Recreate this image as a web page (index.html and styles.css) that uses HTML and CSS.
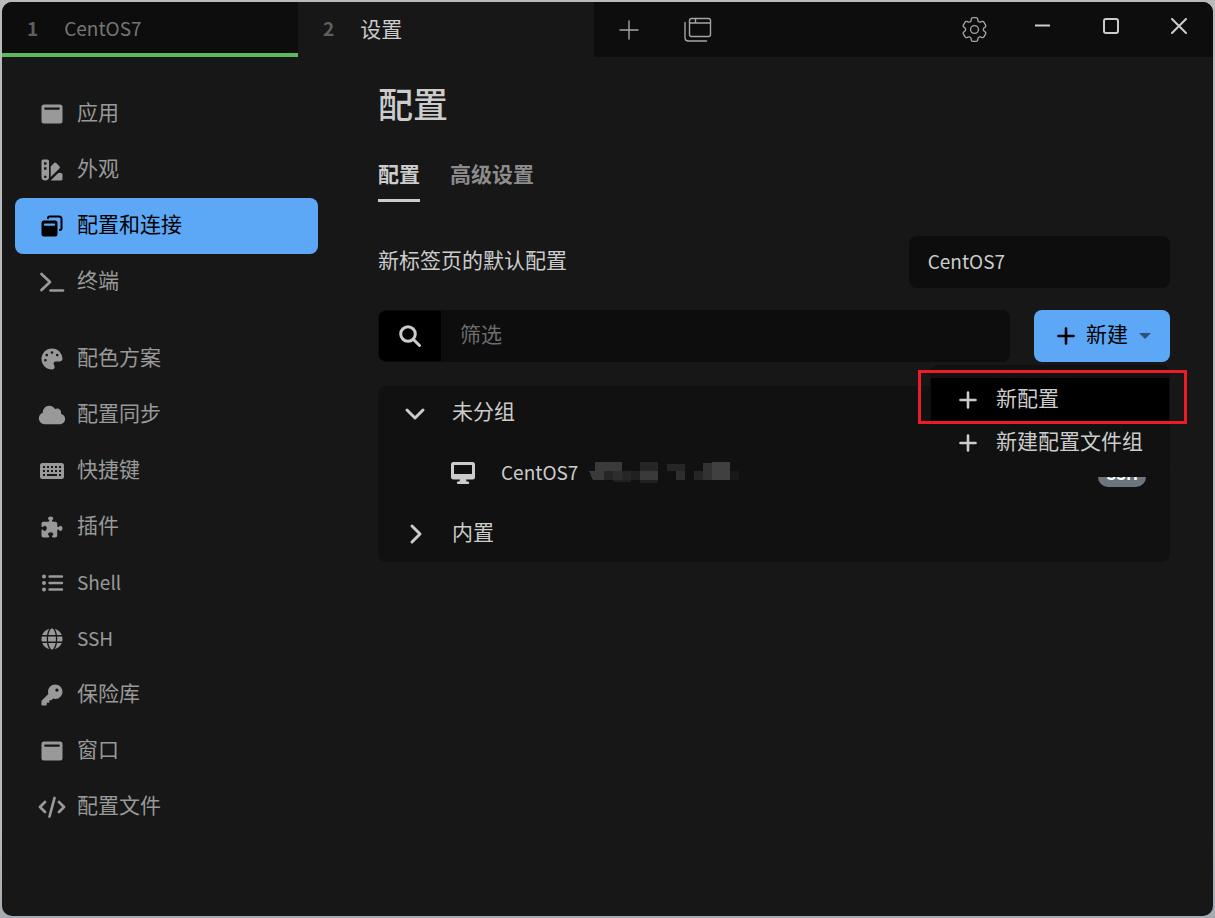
FILE: index.html
```html
<!DOCTYPE html>
<html lang="zh-CN">
<head>
    <meta charset="UTF-8">
    <meta name="viewport" content="width=device-width, initial-scale=1.0">
    <title>设置</title>
    <link rel="stylesheet" href="styles.css">
</head>
<body>
<div class="window">
    <!-- Tab bar -->
    <header class="tab-bar">
        <button type="button" class="tab has-activity"><span class="tab-index">1</span><span class="latin">CentOS7</span></button>
        <button type="button" class="tab active"><span class="tab-index">2</span><span>设置</span></button>
        <button type="button" class="bar-btn" aria-label="新标签页">
            <svg width="20" height="20" viewBox="0 0 20 20" class="line"><path d="M10 1v18M1 10h18"/></svg>
        </button>
        <button type="button" class="bar-btn" aria-label="配置和连接">
            <svg width="28" height="26" viewBox="0 0 28 26" class="line"><rect x="5.5" y="1.5" width="21" height="18" rx="2"/><path d="M5.5 6h21M11.500 2v4M1 5.500v15q0 3.500 3.500 3.500h18"/></svg>
        </button>
        <span class="spacer"></span>
        <button type="button" class="bar-btn" aria-label="设置">
            <svg width="25" height="25" viewBox="2.500 2.500 19 19" class="line thin"><path d="M9.594 3.94c.09-.542.56-.94 1.11-.94h2.593c.55 0 1.02.398 1.11.94l.213 1.281c.063.374.313.686.645.87.074.04.147.083.22.127.325.196.72.257 1.075.124l1.217-.456a1.125 1.125 0 0 1 1.37.49l1.296 2.247a1.125 1.125 0 0 1-.26 1.431l-1.003.827c-.293.241-.438.613-.43.992a7.723 7.723 0 0 1 0 .255c-.008.378.137.75.43.991l1.004.827c.424.35.534.955.26 1.43l-1.298 2.247a1.125 1.125 0 0 1-1.369.491l-1.217-.456c-.355-.133-.75-.072-1.076.124a6.47 6.47 0 0 1-.22.128c-.331.183-.581.495-.644.869l-.213 1.281c-.09.543-.56.94-1.11.94h-2.594c-.55 0-1.019-.398-1.11-.94l-.213-1.281c-.062-.374-.312-.686-.644-.87a6.52 6.52 0 0 1-.22-.127c-.325-.196-.72-.257-1.076-.124l-1.217.456a1.125 1.125 0 0 1-1.369-.49l-1.297-2.247a1.125 1.125 0 0 1 .26-1.431l1.004-.827c.292-.24.437-.613.43-.991a6.932 6.932 0 0 1 0-.255c.007-.38-.138-.751-.43-.992l-1.004-.827a1.125 1.125 0 0 1-.26-1.43l1.297-2.247a1.125 1.125 0 0 1 1.37-.491l1.216.456c.356.133.751.072 1.076-.124.072-.044.146-.086.22-.128.332-.183.582-.495.644-.869l.214-1.28Z"/><circle cx="12" cy="12" r="3"/></svg>
        </button>
        <div class="window-controls">
            <button type="button" class="bar-btn" aria-label="最小化">
                <svg width="16" height="16" viewBox="0 0 16 16"><path d="M0 6.500h15v2H0z"/></svg>
            </button>
            <button type="button" class="bar-btn" aria-label="最大化">
                <svg width="16" height="16" viewBox="0 0 16 16" class="line bold"><rect x="1" y="1" width="14" height="14" rx="2"/></svg>
            </button>
            <button type="button" class="bar-btn" aria-label="关闭">
                <svg width="16" height="16" viewBox="0 0 16 16" class="line bold"><path d="M1 1l14 14M15 1L1 15"/></svg>
            </button>
        </div>
    </header>

    <div class="page">
        <!-- Sidebar -->
        <nav class="sidebar">
            <div class="nav-group">
                <a href="#application"><svg viewBox="0 0 28 22"><path fill-rule="evenodd" d="M6 1.500h16a2.500 2.500 0 0 1 2.500 2.500v14a2.500 2.500 0 0 1-2.500 2.500H6a2.500 2.500 0 0 1-2.500-2.500V4A2.500 2.500 0 0 1 6 1.500zm1.200 3a1 1 0 0 0 0 2.200h13.600a1 1 0 0 0 0-2.200z"/></svg><span class="text">应用</span></a>
                <a href="#appearance"><svg viewBox="0 0 28 22"><path fill-rule="evenodd" d="M5 .5h4.500a1.500 1.500 0 0 1 1.500 1.500v15.800a3.750 3.750 0 0 1-7.500 0V2A1.500 1.500 0 0 1 5 .5zm1 2.800v2.400h2.500V3.300zm0 5v2.400h2.500V8.300zm1.200 8.200a1.300 1.300 0 1 0 .1 0zM12.700 7.500l3.400-3.400a1.500 1.500 0 0 1 2.100 0l3.200 3.200a1.500 1.500 0 0 1 0 2.100l-8.700 8.700zM20.300 14H23a1.500 1.500 0 0 1 1.500 1.500V20a1.500 1.500 0 0 1-1.500 1.500H12.700z"/></svg><span class="text">外观</span></a>
                <a href="#profiles" class="active"><svg viewBox="0 0 28 22"><path fill-rule="evenodd" d="M6 5.500h11a2.500 2.500 0 0 1 2.500 2.500v11a2.500 2.500 0 0 1-2.500 2.500H6A2.500 2.500 0 0 1 3.500 19V8A2.500 2.500 0 0 1 6 5.500zm.8 2.900a1 1 0 0 0-1 1v.3a1 1 0 0 0 1 1h9.400a1 1 0 0 0 1-1v-.3a1 1 0 0 0-1-1z"/><path class="stroke thin" d="M10 3.200q0-1.700 1.700-1.700h9.300q2.500 0 2.500 2.500v9.300q0 1.700-1.700 1.700"/></svg><span class="text">配置和连接</span></a>
                <a href="#terminal"><svg viewBox="0 0 28 22"><path class="stroke wide" d="M3.500 3l8.500 8-8.500 8M12.500 19.500h12.500"/></svg><span class="text">终端</span></a>
            </div>
            <div class="nav-group">
                <a href="#colors"><svg viewBox="-85 -12 683 536"><path d="M512 256c0 .9 0 1.800 0 2.700c-.4 36.500-33.600 61.300-70.100 61.300H344c-26.500 0-48 21.500-48 48c0 3.400 .4 6.700 1 9.900c2.100 10.200 6.500 20 10.800 29.900c6.100 13.800 12.100 27.500 12.100 42c0 31.800-21.600 60.700-53.400 62c-3.500 .1-7 .2-10.600 .2C114.600 512 0 397.400 0 256S114.600 0 256 0S512 114.600 512 256zM128 288a32 32 0 1 0 -64 0 32 32 0 1 0 64 0zm0-96a32 32 0 1 0 0-64 32 32 0 1 0 0 64zM288 96a32 32 0 1 0 -64 0 32 32 0 1 0 64 0zm96 96a32 32 0 1 0 0-64 32 32 0 1 0 0 64z"/></svg><span class="text">配色方案</span></a>
                <a href="#sync"><svg viewBox="-21 -12 683 536"><path d="M0 336c0 79.500 64.500 144 144 144H512c70.700 0 128-57.300 128-128c0-61.900-44-113.600-102.400-125.400c4.100-10.700 6.400-22.400 6.400-34.600c0-53-43-96-96-96c-19.700 0-38.100 6-53.300 16.200C367 64.200 315.300 32 256 32C167.600 32 96 103.600 96 192c0 2.700 .1 5.400 .2 8.100C40.200 219.800 0 273.200 0 336z"/></svg><span class="text">配置同步</span></a>
                <a href="#hotkeys"><svg viewBox="0 0 28 22"><path fill-rule="evenodd" d="M4.500 3h19A2.500 2.500 0 0 1 26 5.500v11a2.500 2.500 0 0 1-2.500 2.500h-19A2.500 2.500 0 0 1 2 16.500v-11A2.500 2.500 0 0 1 4.500 3zM5 6v2h2V6zm4 0v2h2V6zm4 0v2h2V6zm4 0v2h2V6zm4 0v2h2V6zM5 10v2h2v-2zm4 0v2h2v-2zm4 0v2h2v-2zm4 0v2h2v-2zm4 0v2h2v-2zM5 14v2h2v-2zm4 0v2h10v-2zm12 0v2h2v-2z"/></svg><span class="text">快捷键</span></a>
                <a href="#plugins"><svg viewBox="-85 -12 683 536"><path d="M192 104.800c0-9.200-5.800-17.300-13.200-22.800C167.200 73.300 160 61.300 160 48c0-26.500 28.700-48 64-48s64 21.500 64 48c0 13.300-7.200 25.300-18.800 34c-7.400 5.500-13.200 13.600-13.200 22.800v0c0 12.800 10.400 23.200 23.200 23.200H336c26.500 0 48 21.500 48 48v56.800c0 12.800 10.400 23.200 23.200 23.200v0c9.200 0 17.300-5.800 22.800-13.200c8.700-11.600 20.700-18.800 34-18.800c26.500 0 48 28.700 48 64s-21.500 64-48 64c-13.300 0-25.300-7.200-34-18.800c-5.500-7.400-13.600-13.200-22.800-13.200v0c-12.800 0-23.200 10.400-23.200 23.200V464c0 26.500-21.500 48-48 48H279.200c-12.800 0-23.200-10.400-23.200-23.200v0c0-9.200 5.800-17.300 13.200-22.800c11.600-8.700 18.800-20.700 18.800-34c0-26.500-28.700-48-64-48s-64 21.500-64 48c0 13.300 7.200 25.300 18.800 34c7.400 5.500 13.200 13.600 13.200 22.800v0c0 12.800-10.400 23.200-23.200 23.200H48c-26.500 0-48-21.500-48-48V343.200C0 330.400 10.400 320 23.200 320v0c9.200 0 17.300 5.800 22.800 13.200C54.700 344.800 66.700 352 80 352c26.500 0 48-28.700 48-64s-21.500-64-48-64c-13.300 0-25.300 7.200-34 18.800C40.500 250.200 32.400 256 23.200 256v0C10.400 256 0 245.600 0 232.800V176c0-26.500 21.500-48 48-48H168.800c12.800 0 23.200-10.400 23.200-23.200v0z"/></svg><span class="text">插件</span></a>
                <a href="#shell"><svg viewBox="0 0 28 22"><circle cx="6" cy="4.500" r="2"/><circle cx="6" cy="11" r="2"/><circle cx="6" cy="17.500" r="2"/><path class="stroke" d="M11.500 4.500H24M11.500 11H24M11.500 17.500H24"/></svg><span class="latin">Shell</span></a>
                <a href="#ssh"><svg viewBox="-85 -12 683 536"><path d="M352 256c0 22.200-1.200 43.600-3.300 64H163.300c-2.200-20.400-3.300-41.800-3.300-64s1.200-43.600 3.300-64H348.700c2.200 20.400 3.300 41.800 3.300 64zm28.800-64H503.900c5.300 20.500 8.100 41.900 8.100 64s-2.800 43.500-8.100 64H380.800c2.100-20.600 3.200-42 3.200-64s-1.100-43.400-3.200-64zm112.600-32H376.700c-10-63.900-29.800-117.400-55.300-151.600c78.300 20.700 142 77.500 171.900 151.600zm-149.100 0H167.700c6.100-36.400 15.500-68.600 27-94.700c10.500-23.600 22.200-40.700 33.500-51.500C239.400 3.200 248.700 0 256 0s16.600 3.200 27.800 13.800c11.300 10.800 23 27.900 33.500 51.500c11.600 26 20.900 58.200 27 94.700zm-209 0H18.600C48.600 85.900 112.200 29.100 190.600 8.400C165.100 42.600 145.300 96.100 135.300 160zM8.100 192H131.200c-2.100 20.600-3.200 42-3.200 64s1.100 43.400 3.200 64H8.100C2.800 299.500 0 278.100 0 256s2.800-43.500 8.100-64zM194.700 446.600c-11.600-26-20.900-58.200-27-94.600H344.300c-6.100 36.400-15.500 68.600-27 94.600c-10.500 23.600-22.200 40.700-33.500 51.500C272.600 508.800 263.300 512 256 512s-16.600-3.200-27.800-13.800c-11.300-10.800-23-27.900-33.500-51.500zM135.300 352c10 63.900 29.800 117.400 55.300 151.600C112.200 482.900 48.600 426.100 18.600 352H135.300zm358.100 0c-30 74.100-93.600 130.900-171.900 151.600c25.500-34.200 45.200-87.700 55.300-151.600H493.400z"/></svg><span class="latin">SSH</span></a>
                <a href="#vault"><svg viewBox="-85 -12 683 536"><path d="M336 352c97.200 0 176-78.800 176-176S433.200 0 336 0S160 78.800 160 176c0 18.700 2.900 36.800 8.300 53.700L7 391c-4.500 4.500-7 10.600-7 17v80c0 13.300 10.700 24 24 24h80c13.300 0 24-10.700 24-24V448h40c13.300 0 24-10.700 24-24V384h40c6.400 0 12.500-2.500 17-7l33.300-33.300c16.900 5.400 35 8.300 53.700 8.300zM376 96a40 40 0 1 1 0 80 40 40 0 1 1 0-80z"/></svg><span class="text">保险库</span></a>
                <a href="#window"><svg viewBox="0 0 28 22"><path fill-rule="evenodd" d="M6 1.500h16a2.500 2.500 0 0 1 2.500 2.500v14a2.500 2.500 0 0 1-2.500 2.500H6a2.500 2.500 0 0 1-2.500-2.500V4A2.500 2.500 0 0 1 6 1.500zm1.200 3a1 1 0 0 0 0 2.200h13.600a1 1 0 0 0 0-2.200z"/></svg><span class="text">窗口</span></a>
                <a href="#config-file"><svg viewBox="0 0 28 22"><path class="stroke wide" d="M7 6l-5 5 5 5M21 6l5 5-5 5M16.500 2l-5 18.500"/></svg><span class="text">配置文件</span></a>
            </div>
        </nav>

        <!-- Settings content -->
        <main class="content">
            <h1>配置</h1>
            <div class="content-tabs">
                <button type="button" class="active">配置</button>
                <button type="button">高级设置</button>
            </div>

            <div class="form-line">
                <label for="defaultProfile" class="text">新标签页的默认配置</label>
                <select id="defaultProfile">
                    <option>CentOS7</option>
                </select>
            </div>

            <div class="toolbar">
                <div class="search">
                    <label for="filter" aria-label="筛选">
                        <svg width="22" height="22" viewBox="0 0 22 22" class="line heavy"><circle cx="9" cy="9" r="7.300"/><path d="M14.500 14.500l6 6"/></svg>
                    </label>
                    <input type="text" id="filter" placeholder="筛选">
                </div>
                <div class="dropdown">
                    <button type="button" class="btn-primary">
                        <svg width="18" height="18" viewBox="0 0 18 18" class="line plus"><path d="M9 1.500v15M1.500 9h15"/></svg>
                        <span class="text">新建</span>
                        <svg width="12" height="6" viewBox="0 0 12 6" class="caret"><path d="M0 0h12L6 6z"/></svg>
                    </button>
                    <div class="menu">
                        <button type="button" class="highlighted">
                            <svg width="18" height="18" viewBox="0 0 18 18" class="line plus"><path d="M9 1.500v15M1.500 9h15"/></svg>
                            <span class="text">新配置</span>
                            <span class="marker"></span>
                        </button>
                        <button type="button">
                            <svg width="18" height="18" viewBox="0 0 18 18" class="line plus"><path d="M9 1.500v15M1.500 9h15"/></svg>
                            <span class="text">新建配置文件组</span>
                        </button>
                    </div>
                </div>
            </div>

            <div class="list">
                <button type="button" class="list-group">
                    <svg width="24" height="24" viewBox="0 0 24 24" class="line heavy"><path d="M4 9l8 8 8-8"/></svg>
                    <span class="text">未分组</span>
                </button>
                <div class="list-item">
                    <svg width="24" height="22" viewBox="0 0 24 22"><path fill-rule="evenodd" d="M2.500 0h19A2.500 2.500 0 0 1 24 2.500v12.500a2.500 2.500 0 0 1-2.500 2.500H15l.6 2H17a1.200 1.200 0 0 1 0 2.400H7a1.200 1.200 0 0 1 0-2.400h1.400l.6-2H2.500A2.500 2.500 0 0 1 0 15V2.500A2.500 2.500 0 0 1 2.500 0zM3 3v9h18V3z"/></svg>
                    <span class="latin">CentOS7</span>
                    <!-- masked host -->
                    <svg width="152" height="24" viewBox="0 0 152 24" class="masked" shape-rendering="crispEdges">
                        <path fill="#3a3a3a" d="M7 1h27v9H7zM1 10h15v9H5zM52 10h18v9H52z"/>
                        <path fill="#262626" d="M52 1h18v9H52zM16 10h9v9h-9zM34 10h9v9h-9zM79 3h18v7H79zM106 10h9v9h-9z"/>
                        <path fill="#2e2e2e" d="M25 10h9v9h-9zM88 10h9v9h-9z"/>
                        <path fill="#202020" d="M43 10h9v9h-9zM25 19h18v2H25zM52 19h18v3H52z"/>
                        <path fill="#323232" d="M115 2h9v17h-9z"/>
                        <path fill="#404040" d="M124 1h18v18h-18z"/>
                        <path fill="#181818" d="M142 10h9v9h-9z"/>
                    </svg>
                    <span class="badge">SSH</span>
                </div>
                <button type="button" class="list-group">
                    <svg width="24" height="24" viewBox="0 0 24 24" class="line heavy"><path d="M9 4l8 8-8 8"/></svg>
                    <span class="text">内置</span>
                </button>
            </div>
        </main>
    </div>
</div>
</body>
</html>
```

FILE: styles.css
```css
* {
    box-sizing: border-box;
}
body {
    margin: 0;
    padding: 2px;
    min-height: 100vh;
    display: flex;
    background: linear-gradient(#b9bbbb 90%, #a5abb2);
    font-family: "Noto Sans CJK SC", sans-serif;
    font-size: 21px;
    line-height: 32px;
    color: #ccc;
}
button, input, select {
    font: inherit;
    color: inherit;
    background: none;
    border: 0;
    margin: 0;
    padding: 0;
}
button {
    cursor: pointer;
    text-align: left;
}
svg {
    flex: none;
    fill: currentColor;
}
.line {
    fill: none;
    stroke: currentColor;
    stroke-width: 1.4;
    stroke-linecap: round;
    stroke-linejoin: round;
}
.line.thin {
    stroke-width: 1;
}
.line.bold {
    stroke-width: 2;
}
.line.plus {
    stroke-width: 2.6;
}
.line.heavy {
    stroke-width: 3;
}

/* Labels next to icons sit a little above the middle */
.text {
    padding-bottom: 6px;
}
.latin {
    padding-bottom: 2px;
    font-size: 19px;
}
.window {
    flex: 1;
    min-width: 0;
    background: #171717;
    border-radius: 10px;
    overflow: hidden;
}

/* Tab bar */
.tab-bar {
    display: flex;
    height: 55px;
    background: #0d0d0d;
}
.tab {
    flex: 0 1 296px;
    display: flex;
    align-items: center;
    gap: 26px;
    padding: 0 25px;
    border-bottom: 4px solid transparent;
    color: #757575;
}
.tab .latin {
    padding-bottom: 0;
}
.tab.has-activity {
    border-bottom-color: #5cb85c;
}
.tab.active {
    background: #171717;
    color: #ccc;
}
.tab-index {
    font-size: 19px;
    font-weight: 700;
    color: #5f5f5f;
}
.bar-btn {
    width: 69px;
    display: flex;
    align-items: center;
    justify-content: center;
    color: #a5a5a5;
}
.spacer {
    flex: 1;
}
.window-controls {
    display: flex;
    height: 48px;
}
.window-controls .bar-btn {
    width: 68px;
    color: #ccc;
}

/* Sidebar */
.page {
    display: flex;
}
.sidebar {
    flex: 0 0 316px;
    padding: 29px 0 29px 13px;
}
.nav-group {
    margin-bottom: 21px;
}
.nav-group a {
    display: flex;
    align-items: center;
    gap: 11px;
    height: 56px;
    padding: 0 23px;
    border-radius: 8px;
    color: #999;
    text-decoration: none;
}
.nav-group a.active {
    background: #5da8f6;
    color: #000;
}
.nav-group svg {
    width: 28px;
    height: 22px;
}
.stroke {
    fill: none;
    stroke: currentColor;
    stroke-width: 2.4;
    stroke-linecap: round;
    stroke-linejoin: round;
}
.stroke.thin {
    stroke-width: 2;
}
.stroke.wide {
    stroke-width: 2.7;
}

/* Content */
.content {
    flex: 1;
    min-width: 0;
    padding: 21px 43px 21px 60px;
}
h1 {
    margin: 0;
    font-size: 35px;
    font-weight: 500;
    line-height: 50px;
}
.content-tabs {
    display: flex;
    gap: 30px;
    margin: 26px 0 34px;
}
.content-tabs button {
    height: 48px;
    padding-bottom: 7px;
    border-bottom: 3px solid transparent;
    font-weight: 700;
    color: #8c8c8c;
}
.content-tabs .active {
    color: #ccc;
    border-bottom-color: #ccc;
}
.form-line {
    display: flex;
    align-items: center;
    justify-content: space-between;
    margin-bottom: 22px;
}
.form-line select {
    flex: 0 0 33%;
    height: 52px;
    padding: 0 19px 2px;
    border-radius: 8px;
    background: #0d0d0d;
    font-size: 19px;
    appearance: none;
}
.toolbar {
    display: flex;
    gap: 24px;
    margin-bottom: 24px;
}
.search {
    flex: 1;
    display: flex;
    height: 52px;
    border: 1px solid #0d0d0d;
    border-radius: 8px;
    background: #0d0d0d;
    overflow: hidden;
}
.search label {
    width: 62px;
    display: flex;
    align-items: center;
    justify-content: center;
    background: #000;
}
.search input {
    flex: 1;
    padding: 0 19px 6px;
}
.search input::placeholder {
    color: #6c6c6c;
}
.dropdown {
    position: relative;
}
.btn-primary {
    display: flex;
    align-items: center;
    gap: 11px;
    height: 52px;
    padding: 0 19px 0 23px;
    border-radius: 8px;
    background: #5da8f6;
    color: #000;
}
.caret {
    opacity: 0.5;
}

/* Menu opened under the button */
.menu {
    position: absolute;
    top: 55px;
    right: 0;
    z-index: 1;
    padding: 12px 0;
    border: 1px solid #0f0f0f;
    border-radius: 8px;
    background: #111;
}
.menu button {
    position: relative;
    display: flex;
    align-items: center;
    gap: 19px;
    width: 100%;
    height: 43px;
    padding: 0 26px 0 28px;
    white-space: nowrap;
}
.menu .highlighted {
    background: #000;
}
.marker {
    position: absolute;
    inset: -8px -18px -3px -13px;
    border: 3px solid #ed1c24;
}

/* Profile list */
.list {
    border-radius: 8px;
    background: #111;
}
.list-group {
    display: flex;
    align-items: center;
    gap: 25px;
    width: 100%;
    height: 54px;
    padding: 0 25px;
}
.list-item {
    display: flex;
    align-items: center;
    gap: 26px;
    height: 66px;
    padding: 0 24px 0 73px;
}
.list-item .masked {
    margin-left: -16px;
}
.list-group:last-child {
    height: 56px;
}
.badge {
    margin-left: auto;
    padding: 2px 8px;
    border-radius: 10px;
    background: #6c757d;
    font-size: 16px;
    font-weight: 700;
    line-height: 24px;
    color: #fff;
}
```
